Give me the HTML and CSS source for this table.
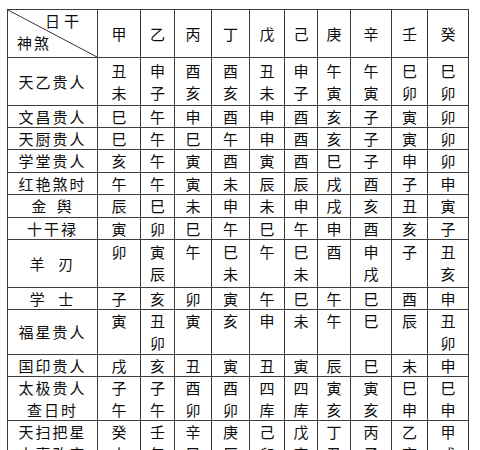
FILE: index.html
```html
<!DOCTYPE html>
<html lang="zh">
<head>
<meta charset="utf-8">
<link rel="stylesheet" href="styles.css">
</head>
<body>
<div class="grid">
  <div class="c hd corner">
    <svg class="diag" viewBox="0 0 89 47" preserveAspectRatio="none"><line x1="0" y1="0" x2="89" y2="47" stroke="#333" stroke-width="1"/></svg>
    <span class="rg">日干</span>
    <span class="ss">神煞</span>
  </div>
  <div class="c hd">甲</div><div class="c hd">乙</div><div class="c hd">丙</div><div class="c hd">丁</div><div class="c hd">戊</div><div class="c hd">己</div><div class="c hd">庚</div><div class="c hd">辛</div><div class="c hd">壬</div><div class="c hd">癸</div>

  <div class="c lb">天乙贵人</div>
  <div class="c v t2">丑<br>未</div><div class="c v t2">申<br>子</div><div class="c v t2">酉<br>亥</div><div class="c v t2">酉<br>亥</div><div class="c v t2">丑<br>未</div><div class="c v t2">申<br>子</div><div class="c v t2">午<br>寅</div><div class="c v t2">午<br>寅</div><div class="c v t2">巳<br>卯</div><div class="c v t2">巳<br>卯</div>

  <div class="c lb">文昌贵人</div>
  <div class="c v">巳</div><div class="c v">午</div><div class="c v">申</div><div class="c v">酉</div><div class="c v">申</div><div class="c v">酉</div><div class="c v">亥</div><div class="c v">子</div><div class="c v">寅</div><div class="c v">卯</div>

  <div class="c lb">天厨贵人</div>
  <div class="c v">巳</div><div class="c v">午</div><div class="c v">巳</div><div class="c v">午</div><div class="c v">申</div><div class="c v">酉</div><div class="c v">亥</div><div class="c v">子</div><div class="c v">寅</div><div class="c v">卯</div>

  <div class="c lb">学堂贵人</div>
  <div class="c v">亥</div><div class="c v">午</div><div class="c v">寅</div><div class="c v">酉</div><div class="c v">寅</div><div class="c v">酉</div><div class="c v">巳</div><div class="c v">子</div><div class="c v">申</div><div class="c v">卯</div>

  <div class="c lb">红艳煞时</div>
  <div class="c v">午</div><div class="c v">午</div><div class="c v">寅</div><div class="c v">未</div><div class="c v">辰</div><div class="c v">辰</div><div class="c v">戌</div><div class="c v">酉</div><div class="c v">子</div><div class="c v">申</div>

  <div class="c lb sp">金 舆</div>
  <div class="c v">辰</div><div class="c v">巳</div><div class="c v">未</div><div class="c v">申</div><div class="c v">未</div><div class="c v">申</div><div class="c v">戌</div><div class="c v">亥</div><div class="c v">丑</div><div class="c v">寅</div>

  <div class="c lb">十干禄</div>
  <div class="c v">寅</div><div class="c v">卯</div><div class="c v">巳</div><div class="c v">午</div><div class="c v">巳</div><div class="c v">午</div><div class="c v">申</div><div class="c v">酉</div><div class="c v">亥</div><div class="c v">子</div>

  <div class="c lb sp2">羊 刃</div>
  <div class="c v t1">卯</div><div class="c v t1">寅<br>辰</div><div class="c v t1">午</div><div class="c v t1">巳<br>未</div><div class="c v t1">午</div><div class="c v t1">巳<br>未</div><div class="c v t1">酉</div><div class="c v t1">申<br>戌</div><div class="c v t1">子</div><div class="c v t1">丑<br>亥</div>

  <div class="c lb sp2">学 士</div>
  <div class="c v">子</div><div class="c v">亥</div><div class="c v">卯</div><div class="c v">寅</div><div class="c v">午</div><div class="c v">巳</div><div class="c v">午</div><div class="c v">巳</div><div class="c v">酉</div><div class="c v">申</div>

  <div class="c lb">福星贵人</div>
  <div class="c v">寅</div><div class="c v">丑<br>卯</div><div class="c v">寅</div><div class="c v">亥</div><div class="c v">申</div><div class="c v">未</div><div class="c v">午</div><div class="c v">巳</div><div class="c v">辰</div><div class="c v">丑<br>卯</div>

  <div class="c lb">国印贵人</div>
  <div class="c v">戌</div><div class="c v">亥</div><div class="c v">丑</div><div class="c v">寅</div><div class="c v">丑</div><div class="c v">寅</div><div class="c v">辰</div><div class="c v">巳</div><div class="c v">未</div><div class="c v">申</div>

  <div class="c lb lb2">太极贵人<br>查日时</div>
  <div class="c v">子<br>午</div><div class="c v">子<br>午</div><div class="c v">酉<br>卯</div><div class="c v">酉<br>卯</div><div class="c v">四<br>库</div><div class="c v">四<br>库</div><div class="c v">寅<br>亥</div><div class="c v">寅<br>亥</div><div class="c v">巳<br>申</div><div class="c v">巳<br>申</div>

  <div class="c lb lb2 top">天扫把星<br>夫妻改宫</div>
  <div class="c v">癸<br>未</div><div class="c v">壬<br>午</div><div class="c v">辛<br>巳</div><div class="c v">庚<br>辰</div><div class="c v">己<br>卯</div><div class="c v">戊<br>寅</div><div class="c v">丁<br>丑</div><div class="c v">丙<br>子</div><div class="c v">乙<br>亥</div><div class="c v">甲<br>戌</div>
</div>
</body>
</html>
```

FILE: styles.css
```css
html, body {
  margin: 0;
  padding: 0;
  background: #fff;
  overflow: hidden;
}
body {
  font-family: "Noto Sans CJK SC", "Noto Sans CJK JP", sans-serif;
  color: #0d0d0d;
  font-size: 15px;
}
.grid {
  display: grid;
  margin: 9px 0 0 7px;
  width: 462px;
  box-sizing: border-box;
  grid-template-columns: 90px 43px 34px 37px 38px 35px 33px 33px 41px 36px 41px;
  grid-template-rows: 48px 48px 22px 22px 23px 22px 23px 22px 48px 22px 45px 22px 44px 48px;
  border-left: 1px solid #3c3c3c;
  border-top: 1px solid #3c3c3c;
}
.c {
  box-sizing: border-box;
  border-right: 1px solid #3c3c3c;
  border-bottom: 1px solid #3c3c3c;
  text-align: center;
  line-height: 22px;
}
.hd {
  display: flex;
  align-items: center;
  justify-content: center;
}
.corner {
  position: relative;
  display: flex;
  flex-direction: column;
  align-items: stretch;
  justify-content: flex-start;
  line-height: 22px;
}
.diag {
  position: absolute;
  left: 0;
  top: 0;
  width: 100%;
  height: 100%;
}
.rg {
  align-self: flex-end;
  padding-right: 14px;
  letter-spacing: 4px;
}
.ss {
  align-self: flex-start;
  padding-left: 9px;
  letter-spacing: 2px;
}
.lb {
  display: flex;
  align-items: center;
  justify-content: center;
  letter-spacing: 2px;
}
.lb.sp {
  word-spacing: 3px;
}
.lb.sp2 {
  word-spacing: 6px;
}
.lb2 {
  line-height: 22px;
}
.lb2.top {
  align-items: flex-start;
}
.v {
  padding-top: 0;
}
.v.t2 {
  padding-top: 2px;
}
.v.t1 {
  padding-top: 1px;
}
```
